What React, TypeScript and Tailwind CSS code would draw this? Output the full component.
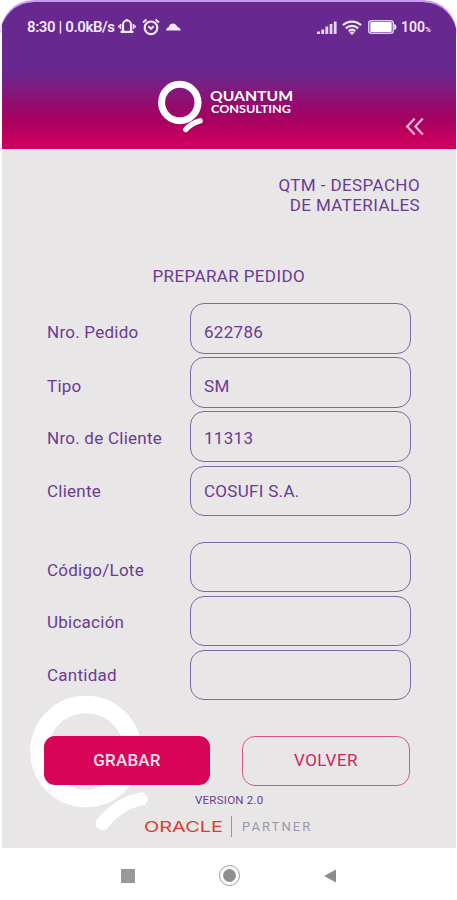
import type { ReactNode } from "react";
import clsx from "clsx";

type Row = {
  label: string;
  value: string;
  offset: string;
};

const orderRows: Row[] = [
  { label: "Nro. Pedido", value: "622786", offset: "pt-[5px]" },
  { label: "Tipo", value: "SM", offset: "pt-[4.500px]" },
  { label: "Nro. de Cliente", value: "11313", offset: "pt-[3px]" },
  { label: "Cliente", value: "COSUFI S.A.", offset: "pt-[1.500px]" },
];

const itemRows: Row[] = [
  { label: "Código/Lote", value: "", offset: "pt-[4px]" },
  { label: "Ubicación", value: "", offset: "pt-[2.500px]" },
  { label: "Cantidad", value: "", offset: "pt-[1px]" },
];

function StatusBar() {
  return (
    <div className="flex h-[50px] items-center justify-between pl-[25px] pr-[25px] pt-px text-[#f3e9fa]">
      <div className="flex items-center">
        <span className="w-[87px] whitespace-nowrap text-[15px] font-semibold tracking-[-0.4px]">
          8:30 | 0.0kB/s
        </span>
        {/* vibrating bell */}
        <svg className="ml-[4px] -mt-[2px]" width="18" height="17" viewBox="0 0 18 17" fill="none" stroke="currentColor">
          <path d="M5 13V6.500a4 4 0 0 1 8 0V13" strokeWidth="2.200" />
          <path d="M2.500 13.800h13" strokeWidth="2.200" />
          <path d="M9 1V2.500" strokeWidth="2" />
          <path d="M2.500 6v5M15.500 6v5M.8 7.500v2M17.200 7.500v2" strokeWidth="1.600" />
        </svg>
        {/* alarm clock */}
        <svg className="ml-[6px] -mt-[2px]" width="18" height="18" viewBox="0 0 18 18" fill="none" stroke="currentColor">
          <circle cx="9" cy="9.800" r="6.300" strokeWidth="2.200" />
          <path d="M1 4.500 4.500 1.500M17 4.500 13.500 1.500" strokeWidth="2" />
          <path d="M6.300 8.300 9 10.700l2.700-2.400" strokeWidth="2.200" />
        </svg>
        <svg className="ml-[6px] -mt-[2px]" width="15" height="8" viewBox="0 0 15 8" fill="currentColor">
          <path d="M0 7.500C.3 5.500 1.500 4.500 2.800 3.900 3.600 1.500 5 .5 6.800.5c2.200 0 3.700 1.300 4.400 3.200C13 4 14.500 5.500 14.800 7.500Z" />
        </svg>
      </div>
      <div className="flex items-center">
        <svg className="ml-[2px]" width="20" height="13" viewBox="0 0 20 13" fill="currentColor">
          <path d="M0 10.500h3v2.500H0zM4.200 8.500h3V13h-3zM8.400 5.500h2.800V13H8.400zM12.600 3h2.800v10h-2.800zM16.800.5h2.800V13h-2.800z" opacity=".9" />
        </svg>
        <svg className="ml-[5px] -mt-[1px]" width="20" height="15" viewBox="0 0 20 15" fill="none" stroke="currentColor" strokeWidth="2.300">
          <path d="M1 5.200C6 .4 14 .4 19 5.200M3.800 8.300c3.600-3.300 8.800-3.300 12.400 0M6.600 11.100c2-1.700 4.800-1.700 6.800 0" />
          <path d="m7.500 12.500 2.500 2.500 2.500-2.500a4 4 0 0 0-5 0Z" fill="currentColor" stroke="none" />
        </svg>
        <svg className="ml-[6px] -mt-[1px]" width="29" height="14" viewBox="0 0 29 14" fill="currentColor">
          <rect x=".75" y=".75" width="24.500" height="12.500" rx="2.500" fill="none" stroke="#d9c8e6" strokeWidth="1.500" />
          <rect x="2.300" y="2" width="21.400" height="10" rx="1" fill="#fff" />
          <path d="M26.200 4c1.700.3 2.200 1.500 2.200 3s-.5 2.700-2.200 3z" />
        </svg>
        <span className="ml-[4px] text-[14px] font-semibold">
          100<span className="text-[8px]">%</span>
        </span>
      </div>
    </div>
  );
}

function Header() {
  return (
    <header className="h-[146.500px] bg-[linear-gradient(to_bottom,#67288f_0px,#67288f_69px,#7d1c80_85px,#950b6c_104px,#a90060_120px,#c4005e_135px,#d00060_147px)]">
      <StatusBar />
      <div className="flex h-[96px] pl-[154px]">
        <svg className="mt-[26.500px]" width="50" height="56" viewBox="0 0 50 56" fill="none" stroke="#fff">
          <circle cx="23.800" cy="23.500" r="18.200" strokeWidth="7" />
          <path d="M29.800 50.500C33.500 46 38 43.300 44 41.800" strokeWidth="5.500" strokeLinecap="round" />
        </svg>
        <svg className="mt-[32px]" width="90" height="32" fill="#fff" fontFamily="Lato, sans-serif">
          <text x="4" y="16.500" fontSize="14" fontWeight="700" textLength="83" lengthAdjust="spacingAndGlyphs">
            QUANTUM
          </text>
          <text x="5" y="29" fontSize="10.500" fontWeight="700" textLength="80" lengthAdjust="spacingAndGlyphs">
            CONSULTING
          </text>
        </svg>
        <button className="ml-[109px] mt-[65px] h-[19px] w-[20px] text-[#f8b7da]" aria-label="Volver">
          <svg width="20" height="19" viewBox="0 0 20 19" fill="none" stroke="currentColor" strokeWidth="2.200">
            <path d="M9.700 1.500 2.200 9.500l7.500 8M17.800 1.500l-7.500 8 7.500 8" />
          </svg>
        </button>
      </div>
    </header>
  );
}

function FormRow({ label, value, offset }: Row) {
  return (
    <label className="flex h-[50.500px] text-[17px]">
      <span className={clsx("w-[143px] leading-[49px] tracking-[0.25px]", offset)}>{label}</span>
      <span className={clsx("h-full w-[221px] rounded-[14px] border-[1.500px] border-[#7e67a8] pl-[13px] leading-[47px] tracking-[0.3px]", offset)}>
        {value}
      </span>
    </label>
  );
}

function FormGroup({ children }: { children: ReactNode }) {
  return <div className="flex flex-col gap-[3.700px]">{children}</div>;
}

export default function App() {
  return (
    <div className="h-[900px] w-[457px] bg-white font-['Roboto',sans-serif]">
      <div className="h-full overflow-hidden rounded-t-[34px] bg-[linear-gradient(to_bottom,#c79cf0_0px,#c79cf0_60px,#f4b8d4_148px,#f6f6f6_149px,#fff_848px)] pt-[2px]">
        <div className="h-full overflow-hidden rounded-t-[34px] bg-white pl-[2px] pr-[1px]">
          <Header />
          <main className="relative h-[699.500px] bg-[#e8e6e7] pl-[45px] text-[#6b3b94]">
            <svg className="absolute left-[27px] top-[545px]" width="120" height="140" viewBox="0 0 120 140" fill="none" stroke="#fff">
              <circle cx="57" cy="57.500" r="47" strokeWidth="17.500" />
              <path d="M73.500 129.500C84 116 96 108.500 112 105" strokeWidth="13.500" strokeLinecap="round" />
            </svg>
            <div className="relative">
              <h1 className="pr-[36px] pt-[26.500px] text-right text-[17px] leading-[20px] tracking-[0.4px]">
                QTM - DESPACHO
                <br />
                DE MATERIALES
              </h1>
              <h2 className="pl-[105.500px] pt-[51px] text-[17px] leading-[20px] tracking-[0.38px]">
                PREPARAR PEDIDO
              </h2>
              <form className="pt-[17px]">
                <FormGroup>
                  {orderRows.map((row) => (
                    <FormRow key={row.label} {...row} />
                  ))}
                </FormGroup>
                <div className="h-[25.500px]" />
                <FormGroup>
                  {itemRows.map((row) => (
                    <FormRow key={row.label} {...row} />
                  ))}
                </FormGroup>
              </form>
              <div className="-ml-[3px] flex items-start gap-[32px] pt-[35.500px] text-[17px] tracking-[0.2px]">
                <button className="mt-[0.500px] h-[48.500px] w-[166px] rounded-[11px] bg-[#d70458] font-medium text-[#fbe1ea]">
                  GRABAR
                </button>
                <button className="h-[50px] w-[168px] rounded-[13px] border-[1.500px] border-[#db5884] tracking-[0.5px] text-[#cf2460]">
                  VOLVER
                </button>
              </div>
              <p className="pl-[148px] pt-[7px] text-[11.500px] leading-[14px] tracking-[0.25px]">VERSION 2.0</p>
              <div className="flex items-center pl-[97px] pt-[9px]">
                <svg width="82" height="22" fill="#e23a2e" fontFamily="Inter, sans-serif">
                  <text x="0" y="16" fontSize="14" fontWeight="400" textLength="79" lengthAdjust="spacingAndGlyphs">
                    ORACLE
                  </text>
                </svg>
                <span className="ml-[5px] h-[21px] w-px bg-[#9993b2]" />
                <span className="ml-[10px] text-[13px] tracking-[2.100px] text-[#9b98ae]">PARTNER</span>
              </div>
            </div>
          </main>
          <nav className="flex h-[52px] items-center pl-[119px] pt-[3px]">
            <span className="h-[14px] w-[14px] bg-[#999]" />
            <span className="ml-[84px] flex h-[21px] w-[21px] items-center justify-center rounded-full border-[1.500px] border-[#999]">
              <span className="h-[13px] w-[13px] rounded-full bg-[#8f8f8f]" />
            </span>
            <svg className="ml-[84px]" width="12" height="14" viewBox="0 0 12 14" fill="#8c8c8c">
              <path d="M12 .5v13L0 7Z" />
            </svg>
          </nav>
        </div>
      </div>
    </div>
  );
}
